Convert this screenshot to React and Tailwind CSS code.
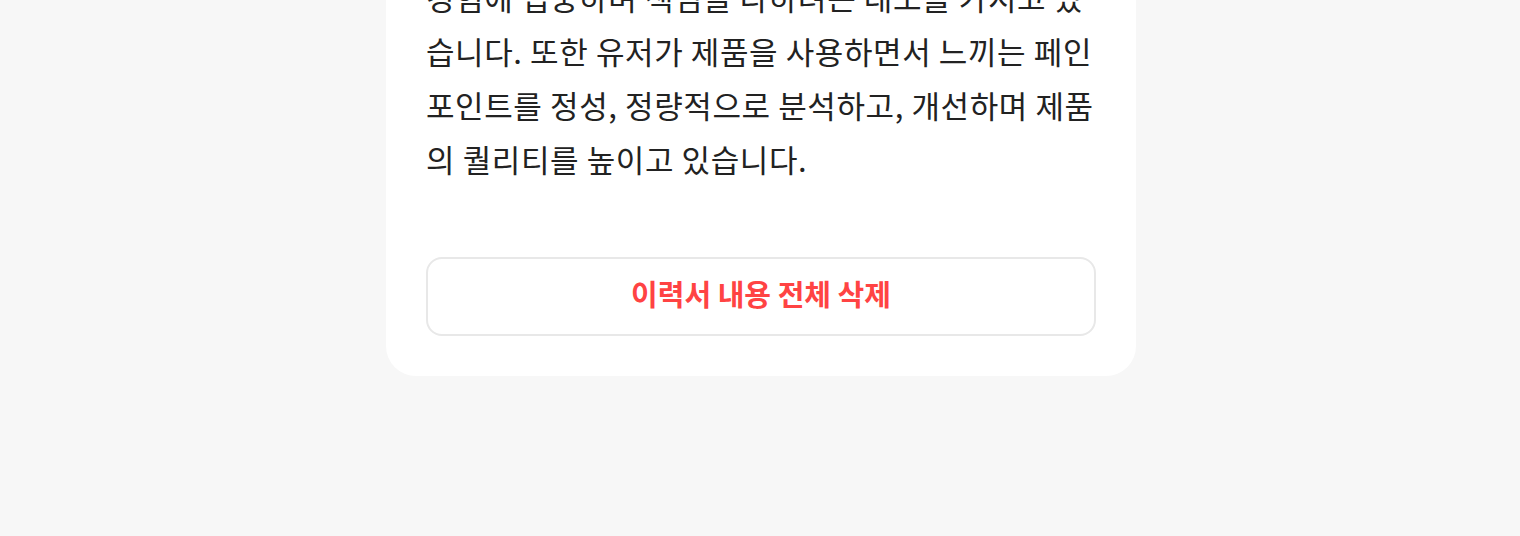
export default function App() {
  const lines = [
    '경험에 집중하며 책임을 다하려는 태도를 가지고 있',
    '습니다. 또한 유저가 제품을 사용하면서 느끼는 페인',
    '포인트를 정성, 정량적으로 분석하고, 개선하며 제품',
    '의 퀄리티를 높이고 있습니다.',
  ]

  return (
    <div
      className="flex h-[536px] w-full justify-center overflow-hidden bg-[#f7f7f7] pl-[2px]"
      style={{ fontFamily: '"Noto Sans CJK KR", "Noto Sans", sans-serif' }}
    >
      <section className="-mt-[70px] h-fit w-[750px] rounded-b-[30px] bg-white px-10 pb-10 pt-10">
        <p className="whitespace-nowrap text-[31px] leading-[54px] tracking-[0.6px] text-[#222222]">
          {lines.map((line, i) => (
            <span key={i} className="block">
              {line}
            </span>
          ))}
        </p>
        <button
          type="button"
          className="mt-[71px] flex h-[79px] w-full items-center justify-center rounded-[16px] border-2 border-[#e8e8e8] bg-white pb-[5px] text-[29px] font-bold text-[#ff4343]"
        >
          이력서 내용 전체 삭제
        </button>
      </section>
    </div>
  )
}
